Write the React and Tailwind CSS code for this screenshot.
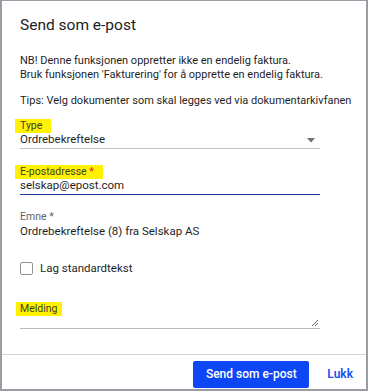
const Label = ({ children, required, highlight }) => (
  <div className="h-[12px] flex items-center">
    <span
      className={
        "text-[10.5px] leading-[14px] " +
        (highlight ? "bg-[#fff200] pl-[5px] pr-[9px] -ml-[5px] text-[#3f3f2a]" : "text-[#5f6368]")
      }
    >
      {children}
      {required && <span className={highlight ? "text-[#e02020]" : ""}> *</span>}
    </span>
  </div>
);

const App = () => {
  return (
    <div className="w-[368px] h-[391px] bg-white border-2 border-t border-[#9a9ba3] font-['Roboto',sans-serif] text-[#1f1f1f] flex flex-col overflow-hidden">
      <div className="px-[18px] pt-[13px] flex-1 min-h-0">
        <h1 className="text-[15.5px] leading-[22px] font-normal text-[#222]">Send som e-post</h1>

        <div className="mt-[18px] text-[11px] leading-[14px] whitespace-nowrap">
          <p>NB! Denne funksjonen oppretter ikke en endelig faktura.</p>
          <p>Bruk funksjonen 'Fakturering' for å opprette en endelig faktura.</p>
          <p className="mt-[12px]">Tips: Velg dokumenter som skal legges ved via dokumentarkivfanen</p>
        </div>

        <div className="mt-[12px] w-[300px]">
          <Label highlight>Type</Label>
          <div className="flex items-center justify-between h-[16px] border-b border-[#c4c4c4] box-content">
            <span className="text-[11.5px]">Ordrebekreftelse</span>
            <svg width="8" height="5" viewBox="0 0 8 5" className="mr-[5px]">
              <path d="M0 0h8L4 4.5z" fill="#707070" />
            </svg>
          </div>
        </div>

        <div className="mt-[17px] w-[300px]">
          <Label highlight required>E-postadresse</Label>
          <div className="flex items-center h-[16px] border-b border-[#1d3a96] box-content">
            <span className="text-[11.5px]">selskap@epost.com</span>
          </div>
        </div>

        <div className="mt-[16px] w-[300px]">
          <Label required>Emne</Label>
          <div className="flex items-center h-[17px]">
            <span className="text-[11.5px]">Ordrebekreftelse (8) fra Selskap AS</span>
          </div>
        </div>

        <label className="mt-[20px] flex items-center gap-[7px]">
          <span className="w-[13px] h-[13px] border border-[#8e909a] rounded-[2px] bg-white" />
          <span className="text-[11.5px]">Lag standardtekst</span>
        </label>

        <div className="mt-[26px] w-[300px]">
          <div className="h-[12px] flex items-center">
            <span className="text-[10.5px] leading-[14px] bg-[#fff200] pl-[4px] pr-[5px] -ml-[4px] text-[#3f3f2a]">Melding</span>
          </div>
          <div className="relative h-[13px] border-b border-[#b9b9b9] box-content">
            <svg width="8" height="8" viewBox="0 0 8 8" className="absolute right-[1px] bottom-[1px]">
              <path d="M1 7L7 1M4 7L7 4" stroke="#555" strokeWidth="0.9" />
            </svg>
          </div>
        </div>
      </div>

      <div className="border-t border-[#d4d4d4] h-[35px] shrink-0 flex items-center justify-end gap-[18px] pr-[13px]">
        <button className="bg-[#0d47f5] text-white text-[12px] font-medium h-[27px] w-[116px] rounded-[2px] mt-[4px]">
          Send som e-post
        </button>
        <button className="text-[#1b4ef0] text-[12px] font-semibold mt-[4px]">Lukk</button>
      </div>
    </div>
  );
};

export default App;
